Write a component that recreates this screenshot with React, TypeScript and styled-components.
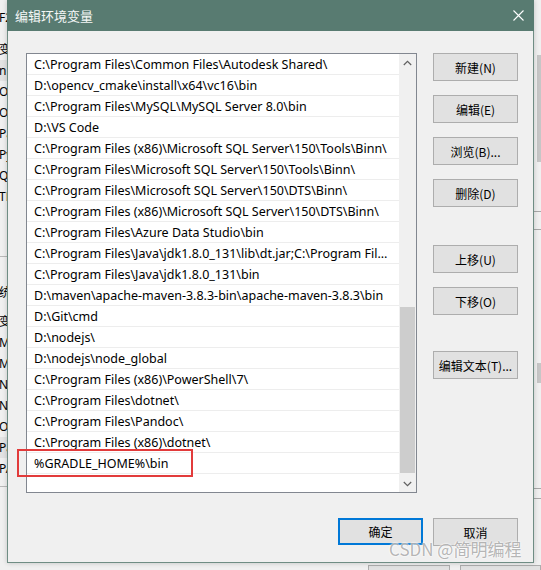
import React from 'react';
import styled, { createGlobalStyle } from 'styled-components';

const GlobalStyle = createGlobalStyle`
  html, body {
    margin: 0;
    padding: 0;
  }
  body {
    width: 541px;
    height: 570px;
    overflow: hidden;
    background: #f0f0f0;
    font-family: "Noto Sans", "Noto Sans CJK SC", sans-serif;
  }
`;

const Desktop = styled.div`
  position: relative;
  width: 541px;
  height: 570px;
  overflow: hidden;
  background: #f0f0f0;
`;

/* the window behind the dialog, only its edges show */
const BackLeft = styled.div`
  position: absolute;
  left: 0;
  top: 0;
  width: 7px;
  height: 570px;
  overflow: hidden;
  display: flex;
  flex-direction: column;
  padding-top: 7px;
  box-sizing: border-box;
  font-size: 12px;
  color: #000;
`;

const BackRow = styled.div<{ $hl?: boolean }>`
  height: 21px;
  line-height: 21px;
  margin-left: -1px;
  white-space: nowrap;
  background: ${(p) => (p.$hl ? '#e3e3e3' : 'transparent')};
`;

const BackGap = styled.div<{ $h: number; $line?: boolean }>`
  height: ${(p) => p.$h}px;
  flex-shrink: 0;
  border-bottom: ${(p) => (p.$line ? '1px solid #b9b9b9' : 'none')};
  box-sizing: border-box;
`;

const BackRight = styled.div`
  position: absolute;
  left: 534px;
  top: 0;
  width: 7px;
  height: 570px;
  display: flex;
  flex-direction: column;
  align-items: flex-end;
`;

const BackThumb = styled.div<{ $mt: number; $h: number }>`
  width: 4px;
  height: ${(p) => p.$h}px;
  margin-top: ${(p) => p.$mt}px;
  background: #c6c6c6;
`;

const BackLine = styled.div<{ $mt: number }>`
  width: 7px;
  height: 1px;
  margin-top: ${(p) => p.$mt}px;
  background: #a8a8a8;
`;

const BackFooter = styled.div`
  position: absolute;
  left: 0;
  top: 563px;
  width: 541px;
  height: 7px;
  display: flex;
  gap: 10px;
  padding: 2px 0 0 368px;
  box-sizing: border-box;
`;

const BackButton = styled.div`
  width: 85px;
  height: 20px;
  border: 1px solid #adadad;
  background: #e1e1e1;
`;

/* dialog */
const Dialog = styled.div`
  position: absolute;
  left: 7px;
  top: 0;
  width: 527px;
  height: 563px;
  display: flex;
  flex-direction: column;
  background: #f0f0f0;
  border: 1px solid #6f8d84;
  border-top: none;
  box-sizing: border-box;
  box-shadow: 0 0 5px rgba(0, 0, 0, 0.2);
`;

const TitleBar = styled.div`
  height: 31px;
  flex-shrink: 0;
  display: flex;
  align-items: center;
  justify-content: space-between;
  background: #587b71;
  padding-left: 8px;
  margin: 0 -1px;
`;

const Title = styled.span`
  color: #f4f7f6;
  font-family: "Noto Sans CJK SC", sans-serif;
  font-size: 13px;
`;

const CloseButton = styled.div`
  width: 32px;
  height: 31px;
  display: flex;
  align-items: center;
  justify-content: center;
`;

const Body = styled.div`
  flex: 1;
  display: flex;
  flex-direction: column;
  padding: 22px 15px 0 18px;
`;

const MainRow = styled.div`
  display: flex;
  gap: 16px;
`;

const ListBox = styled.div`
  width: 391px;
  height: 440px;
  display: flex;
  border: 1px solid #828790;
  background: #fff;
  box-sizing: border-box;
`;

const Items = styled.div`
  flex: 1;
  min-width: 0;
  overflow: hidden;
`;

const Item = styled.div`
  height: 21px;
  line-height: 21px;
  padding: 0 7px 0 7px;
  border-bottom: 1px solid #ededed;
  box-sizing: border-box;
  font-size: 12.5px;
  color: #000;
  white-space: nowrap;
  overflow: hidden;
  text-overflow: ellipsis;
`;

const ScrollBar = styled.div`
  width: 17px;
  flex-shrink: 0;
  display: flex;
  flex-direction: column;
  background: #f0f0f0;
`;

const Arrow = styled.div`
  height: 17px;
  flex-shrink: 0;
  display: flex;
  align-items: center;
  justify-content: center;
`;

const Track = styled.div`
  flex: 1;
  display: flex;
  flex-direction: column;
  align-items: center;
`;

const Thumb = styled.div`
  width: 15px;
  background: #cdcdcd;
`;

const SideButtons = styled.div`
  display: flex;
  flex-direction: column;
  gap: 14px;
`;

const Button = styled.button<{ $extra?: number; $primary?: boolean }>`
  width: 85px;
  height: ${(p) => (p.$primary ? 27 : 28)}px;
  margin-top: ${(p) => p.$extra ?? 0}px;
  padding: 0;
  background: #e1e1e1;
  border: ${(p) => (p.$primary ? '2px solid #0078d7' : '1px solid #adadad')};
  font-family: "Noto Sans CJK SC", sans-serif;
  font-size: 12px;
  color: #000;
  cursor: default;
`;

const Footer = styled.div`
  display: flex;
  justify-content: flex-end;
  gap: 10px;
  margin-top: 25px;
`;

const Highlight = styled.div`
  position: absolute;
  left: 17px;
  top: 449px;
  width: 176px;
  height: 28px;
  border: 2px solid #e23b3b;
  box-sizing: border-box;
`;

const Watermark = styled.div`
  position: absolute;
  left: 389px;
  top: 536px;
  font-family: "Noto Sans CJK SC", sans-serif;
  font-size: 17px;
  color: rgba(150, 150, 150, 0.7);
  text-shadow: 0 0 2px #fff, 0 0 2px #fff;
  white-space: nowrap;
`;

const paths = [
  'C:\\Program Files\\Common Files\\Autodesk Shared\\',
  'D:\\opencv_cmake\\install\\x64\\vc16\\bin',
  'C:\\Program Files\\MySQL\\MySQL Server 8.0\\bin',
  'D:\\VS Code',
  'C:\\Program Files (x86)\\Microsoft SQL Server\\150\\Tools\\Binn\\',
  'C:\\Program Files\\Microsoft SQL Server\\150\\Tools\\Binn\\',
  'C:\\Program Files\\Microsoft SQL Server\\150\\DTS\\Binn\\',
  'C:\\Program Files (x86)\\Microsoft SQL Server\\150\\DTS\\Binn\\',
  'C:\\Program Files\\Azure Data Studio\\bin',
  'C:\\Program Files\\Java\\jdk1.8.0_131\\lib\\dt.jar;C:\\Program Files\\Java\\jdk1.8.0_131\\lib\\tools.jar',
  'C:\\Program Files\\Java\\jdk1.8.0_131\\bin',
  'D:\\maven\\apache-maven-3.8.3-bin\\apache-maven-3.8.3\\bin',
  'D:\\Git\\cmd',
  'D:\\nodejs\\',
  'D:\\nodejs\\node_global',
  'C:\\Program Files (x86)\\PowerShell\\7\\',
  'C:\\Program Files\\dotnet\\',
  'C:\\Program Files\\Pandoc\\',
  'C:\\Program Files (x86)\\dotnet\\',
  '%GRADLE_HOME%\\bin',
  '',
];

const backTop = ['变', 'n', 'O', 'O', 'Pa', 'Py', 'Q', 'TE'];
const backBottom = ['变', 'M', 'M', 'N', 'N', 'O', 'Pa', 'PA'];

const App = () => {
  // scroll position of the list: thumb offset and size inside the track
  const thumbOffset = 236;
  const thumbSize = 166;

  return (
    <Desktop>
      <GlobalStyle />
      <BackLeft>
        <BackRow>F2</BackRow>
        <BackGap $h={11} />
        {backTop.map((t, i) => (
          <BackRow key={'t' + i} $hl={t === 'n'}>{t}</BackRow>
        ))}
        <BackGap $h={50} $line />
        <BackGap $h={25} />
        <BackRow>统</BackRow>
        <BackGap $h={8} />
        {backBottom.map((t, i) => (
          <BackRow key={'b' + i} $hl={t === 'Pa'}>{t}</BackRow>
        ))}
        <BackGap $h={8} $line />
      </BackLeft>
      <BackRight>
        <BackThumb $mt={55} $h={107} />
        <BackLine $mt={49} />
        <BackLine $mt={17} />
        <BackThumb $mt={133} $h={20} />
        <BackLine $mt={105} />
        <BackLine $mt={9} />
      </BackRight>
      <BackFooter>
        <BackButton />
        <BackButton />
      </BackFooter>

      <Dialog>
        <TitleBar>
          <Title>编辑环境变量</Title>
          <CloseButton>
            <svg width="11" height="11" viewBox="0 0 11 11">
              <path d="M0.5 0.5 L10.5 10.5 M10.5 0.5 L0.5 10.5" stroke="#ffffff" strokeWidth="1.1" />
            </svg>
          </CloseButton>
        </TitleBar>
        <Body>
          <MainRow>
            <ListBox>
              <Items>
                {paths.map((p, i) => (
                  <Item key={i}>{p}</Item>
                ))}
              </Items>
              <ScrollBar>
                <Arrow>
                  <svg width="9" height="6" viewBox="0 0 9 6">
                    <path d="M0.8 5 L4.5 1.3 L8.2 5" stroke="#606060" strokeWidth="1.2" fill="none" />
                  </svg>
                </Arrow>
                <Track>
                  <Thumb style={{ marginTop: thumbOffset, height: thumbSize }} />
                </Track>
                <Arrow>
                  <svg width="9" height="6" viewBox="0 0 9 6">
                    <path d="M0.8 1 L4.5 4.7 L8.2 1" stroke="#606060" strokeWidth="1.2" fill="none" />
                  </svg>
                </Arrow>
              </ScrollBar>
            </ListBox>
            <SideButtons>
              <Button>新建(N)</Button>
              <Button>编辑(E)</Button>
              <Button>浏览(B)...</Button>
              <Button>删除(D)</Button>
              <Button $extra={24}>上移(U)</Button>
              <Button>下移(O)</Button>
              <Button $extra={22}>编辑文本(T)...</Button>
            </SideButtons>
          </MainRow>
          <Footer>
            <Button $primary>确定</Button>
            <Button>取消</Button>
          </Footer>
        </Body>
      </Dialog>

      <Highlight />
      <Watermark>CSDN @简明编程</Watermark>
    </Desktop>
  );
};

export default App;
